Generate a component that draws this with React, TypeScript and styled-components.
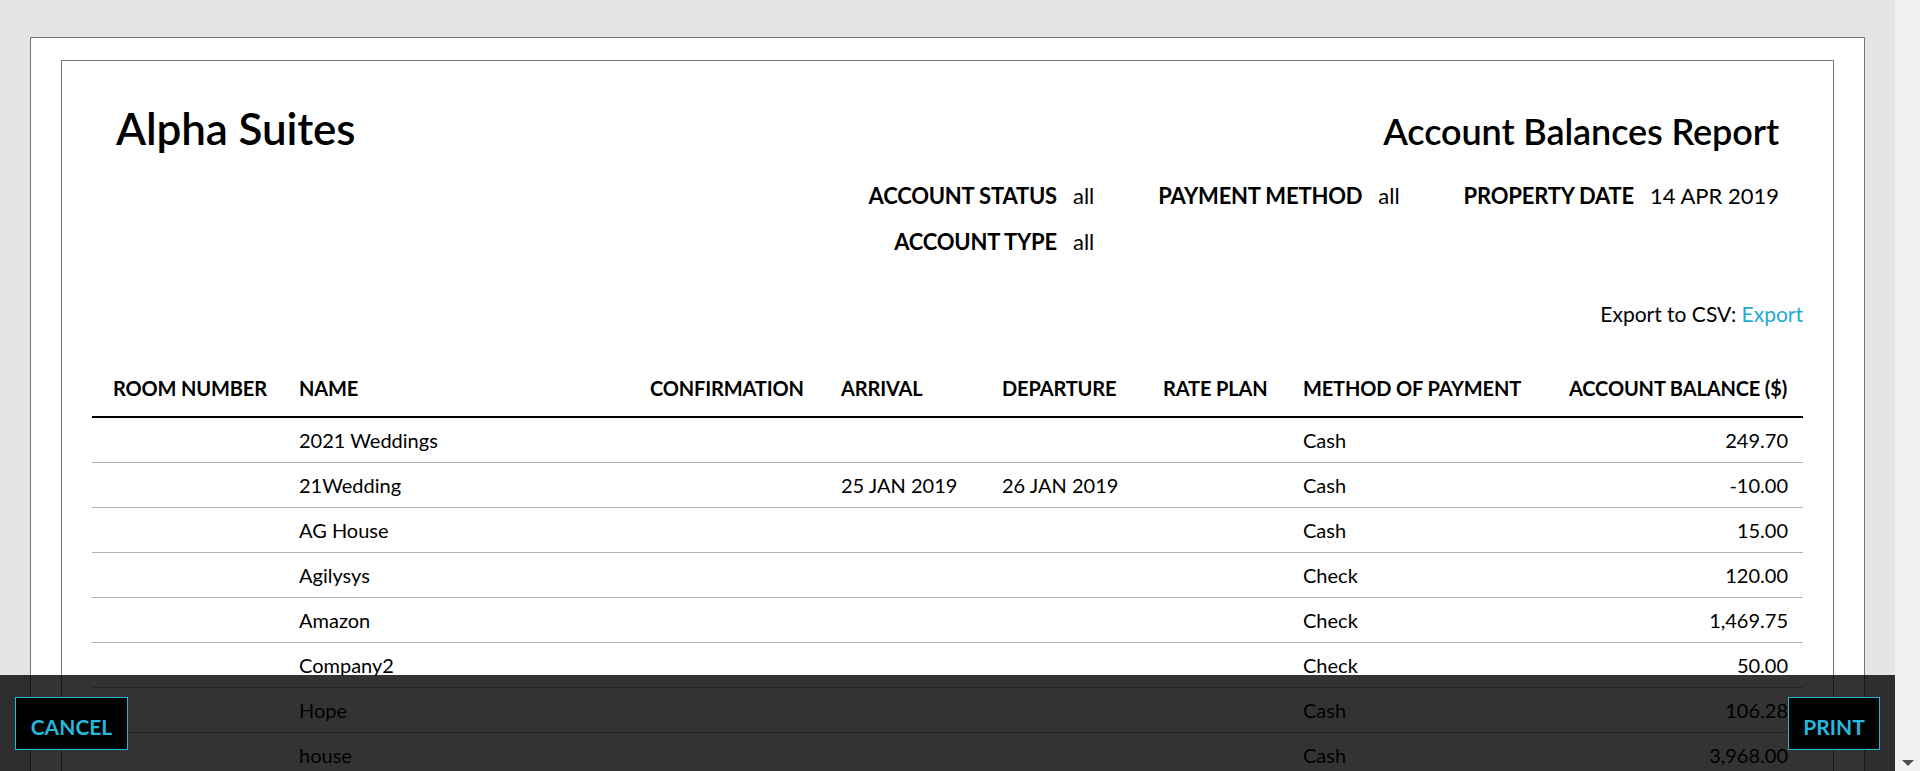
import React from "react";
import styled, { createGlobalStyle } from "styled-components";

const Global = createGlobalStyle`
  html, body { margin: 0; padding: 0; height: 771px; overflow: hidden; background: #e5e5e5; }
  body { font-family: Lato, "Liberation Sans", sans-serif; color: #000; }
  #root { height: 771px; }
`;

const Viewport = styled.div`
  display: flex;
  height: 771px;
  overflow: hidden;
`;

const Main = styled.main`
  position: relative;
  flex: 1;
  min-width: 0;
  height: 771px;
  overflow: hidden;
  padding: 37px 30px 0;
  box-sizing: border-box;
  background: #e5e5e5;
`;

const Scrollbar = styled.aside`
  position: relative;
  width: 25px;
  flex: none;
  background: #f1f1f1;
`;

const ScrollArrow = styled.span`
  position: absolute;
  left: 7px;
  bottom: 5px;
  width: 0;
  height: 0;
  border-left: 6px solid transparent;
  border-right: 6px solid transparent;
  border-top: 6px solid #505050;
`;

const Paper = styled.div`
  background: #fff;
  border: 1px solid #767676;
  padding: 22px 30px 0;
  height: 900px;
  box-sizing: border-box;
`;

const Sheet = styled.div`
  border: 1px solid #767676;
  height: 860px;
  box-sizing: border-box;
  padding: 0 30px 0;
`;

const TitleRow = styled.header`
  display: flex;
  justify-content: space-between;
  align-items: flex-start;
  padding: 42px 24px 0 24px;
`;

const PropertyName = styled.h1`
  margin: 0;
  font-size: 44px;
  line-height: 50px;
  font-weight: 600;
  letter-spacing: -0.15px;
`;

const ReportName = styled.h2`
  margin: 6px 0 0;
  font-size: 36px;
  line-height: 44px;
  font-weight: 600;
  letter-spacing: -0.1px;
`;

const Filters = styled.div`
  display: grid;
  grid-template-columns: repeat(3, auto);
  justify-content: end;
  column-gap: 64px;
  row-gap: 24px;
  padding: 32px 24px 0 0;
`;

const Filter = styled.div`
  display: flex;
  justify-content: flex-end;
  gap: 16px;
  font-size: 22px;
  line-height: 22px;
`;

const FilterLabel = styled.span`
  font-weight: 700;
  letter-spacing: -0.2px;
`;

const ExportLine = styled.div`
  text-align: right;
  font-size: 21px;
  line-height: 24px;
  margin-top: 49px;
`;

const ExportLink = styled.a`
  color: #1fa9d6;
  text-decoration: none;
`;

const Table = styled.table`
  width: 100%;
  table-layout: fixed;
  border-collapse: collapse;
  margin-top: 35px;
  font-size: 20px;
`;

const HeadCell = styled.th<{ $right?: boolean; $first?: boolean }>`
  font-weight: 700;
  line-height: 24px;
  letter-spacing: -0.14px;
  text-align: ${(p) => (p.$right ? "right" : "left")};
  padding: 15px ${(p) => (p.$right ? "16px" : "15px")} 16px ${(p) => (p.$first ? "21px" : "15px")};
  border-bottom: 2px solid #000;
  white-space: nowrap;
`;

const Cell = styled.td<{ $right?: boolean }>`
  height: 45px;
  box-sizing: border-box;
  padding: 0 15px;
  line-height: 24px;
  text-align: ${(p) => (p.$right ? "right" : "left")};
  border-bottom: 1px solid #b3b3b3;
  white-space: nowrap;
`;

const BottomBar = styled.footer`
  position: absolute;
  left: 0;
  right: 0;
  bottom: 0;
  height: 96px;
  background: rgba(0, 0, 0, 0.8);
  display: flex;
  justify-content: space-between;
  align-items: flex-start;
  padding: 22px 15px 0;
  box-sizing: border-box;
`;

const ActionButton = styled.button<{ $w: number }>`
  width: ${(p) => p.$w}px;
  height: 53px;
  box-sizing: border-box;
  background: #000;
  border: 1px solid #26b7dd;
  color: #26b7dd;
  font-family: Lato, "Liberation Sans", sans-serif;
  font-size: 21px;
  font-weight: 700;
  padding: 5px 0 0;
`;

const columns = [192, 351, 191, 161, 161, 140];
const rows = [
  ["2021 Weddings", "", "", "Cash", "249.70"],
  ["21Wedding", "25 JAN 2019", "26 JAN 2019", "Cash", "-10.00"],
  ["AG House", "", "", "Cash", "15.00"],
  ["Agilysys", "", "", "Check", "120.00"],
  ["Amazon", "", "", "Check", "1,469.75"],
  ["Company2", "", "", "Check", "50.00"],
  ["Hope", "", "", "Cash", "106.28"],
  ["house", "", "", "Cash", "3,968.00"],
];
const filters = [
  ["ACCOUNT STATUS", "all"],
  ["PAYMENT METHOD", "all"],
  ["PROPERTY DATE", "14 APR 2019"],
  ["ACCOUNT TYPE", "all"],
];

export default function App() {
  return (
    <Viewport>
      <Global />
      <Main>
        <Paper>
          <Sheet>
            <TitleRow>
              <PropertyName>Alpha Suites</PropertyName>
              <ReportName>Account Balances Report</ReportName>
            </TitleRow>
            <Filters>
              {filters.map(([label, value]) => (
                <Filter key={label}>
                  <FilterLabel>{label}</FilterLabel>
                  <span>{value}</span>
                </Filter>
              ))}
            </Filters>
            <ExportLine>
              Export to CSV: <ExportLink href="#">Export</ExportLink>
            </ExportLine>
            <Table>
              <colgroup>
                {columns.map((w, i) => (
                  <col key={i} style={{ width: w }} />
                ))}
                <col />
                <col />
              </colgroup>
              <thead>
                <tr>
                  <HeadCell $first>ROOM NUMBER</HeadCell>
                  <HeadCell>NAME</HeadCell>
                  <HeadCell>CONFIRMATION</HeadCell>
                  <HeadCell>ARRIVAL</HeadCell>
                  <HeadCell>DEPARTURE</HeadCell>
                  <HeadCell>RATE PLAN</HeadCell>
                  <HeadCell>METHOD OF PAYMENT</HeadCell>
                  <HeadCell $right>ACCOUNT BALANCE ($)</HeadCell>
                </tr>
              </thead>
              <tbody>
                {rows.map(([name, arrival, departure, method, balance]) => (
                  <tr key={name}>
                    <Cell />
                    <Cell>{name}</Cell>
                    <Cell />
                    <Cell>{arrival}</Cell>
                    <Cell>{departure}</Cell>
                    <Cell />
                    <Cell>{method}</Cell>
                    <Cell $right>{balance}</Cell>
                  </tr>
                ))}
              </tbody>
            </Table>
          </Sheet>
        </Paper>
        <BottomBar>
          <ActionButton $w={113}>CANCEL</ActionButton>
          <ActionButton $w={92}>PRINT</ActionButton>
        </BottomBar>
      </Main>
      <Scrollbar>
        <ScrollArrow />
      </Scrollbar>
    </Viewport>
  );
}
